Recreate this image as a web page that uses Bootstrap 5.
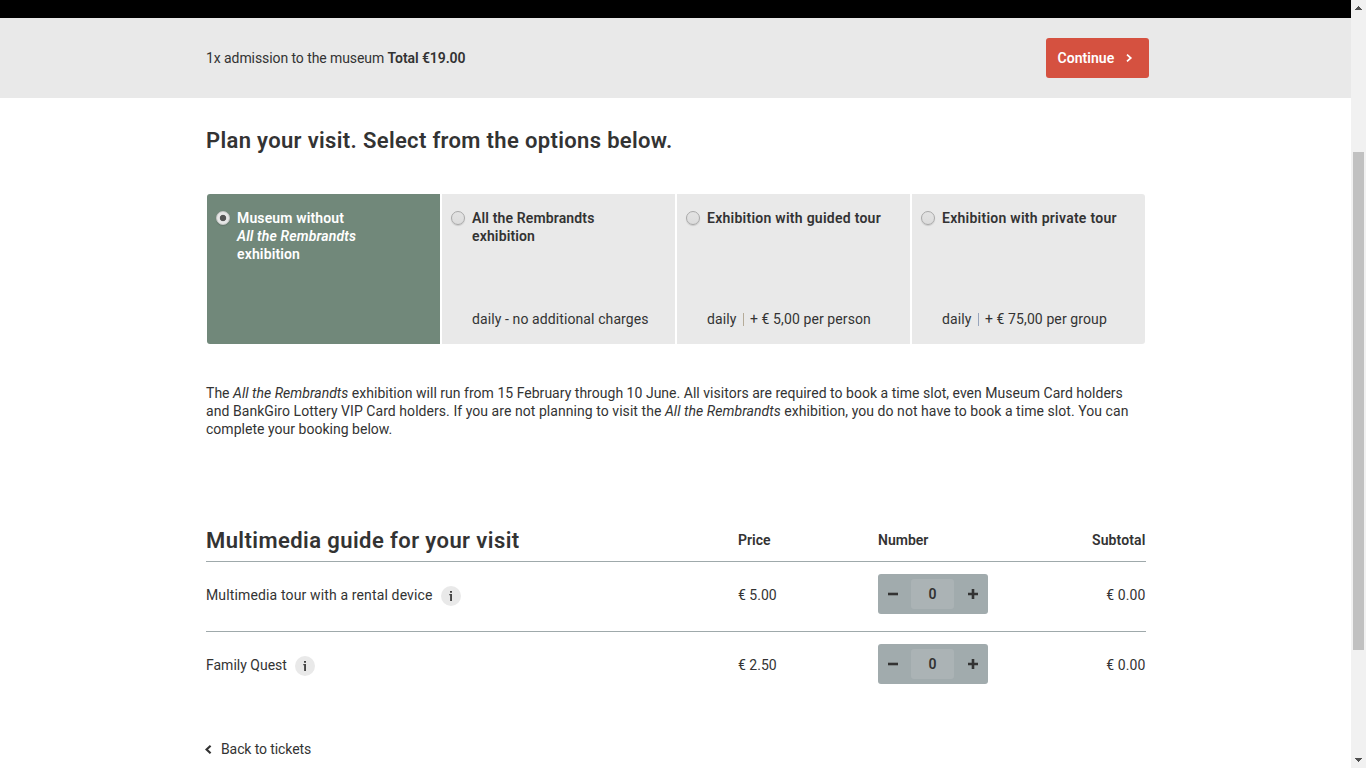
<!DOCTYPE html>
<html lang="en">
<head>
<meta charset="utf-8">
<meta name="viewport" content="width=device-width, initial-scale=1">
<title>Plan your visit</title>
<link rel="stylesheet" href="https://cdn.jsdelivr.net/npm/bootstrap@5.3.0/dist/css/bootstrap.min.css">
<style>
body{font:14px/18px Roboto,"Open Sans",sans-serif;color:#333;height:100vh;overflow:hidden;background:#fff}
b,strong,.semi{font-weight:600}
.wrap{width:940px;margin-left:206px}
.topbar{height:18px;background:#000}
.summary{height:80px;background:#e9e9e9}
.admission{letter-spacing:-.08px}
.btn-go{width:103px;height:40px;background:#d55140;border-radius:3px;margin-right:-3px;padding:0 0 0 11.5px;font-size:14px;letter-spacing:.05px;color:#fff;border:0}
.btn-go:hover{background:#c24535;color:#fff}
.btn-go svg{margin-right:16px}
.title{font-size:22px;line-height:28px;font-weight:600;margin:0;letter-spacing:.34px}
.title-main{padding-top:29px}
.title-guide{letter-spacing:.42px;padding-top:2px}
.options{margin:39px 1px 0;gap:2px;border-radius:3px;overflow:hidden}
.option{width:233px;height:150px;background:#e9e9e9;padding:15px 9px 16px}
.option.active{background:#71887a;color:#fff}
.option-name{font-weight:600;letter-spacing:.26px}
.option-name.tight{letter-spacing:.14px}
.option-note{padding-left:21px;letter-spacing:.1px}
.bar{display:inline-block;width:1px;height:13px;background:#b5ab98;vertical-align:-2px;margin:0 6px 0 6.5px}
.bar.cool{background:#98a5bd}
.dial{width:14px;height:14px;flex:none;margin:2px 7px 0 0;border-radius:50%;border:1px solid #a9a9a9;background:linear-gradient(#e3e3e3,#dcdcdc);box-shadow:0 1px 1px #0002}
.dial.on{background:radial-gradient(circle,#555 2.8px,#e6e6e6 3.6px);border-color:#c5c5c5}
.intro{margin:40px 0 0;white-space:nowrap;letter-spacing:.022px}
.intro .wide{letter-spacing:.055px}
.guide{margin-top:87px}
.guide-row{display:grid;grid-template-columns:532px 140px 140px 1fr;border-bottom:1px solid #9fa9ab}
.guide-head{height:37px;font-weight:600}
.guide-head>span{padding-top:6px}
.guide-item{height:70px;padding-top:12px;align-items:start}
.guide-item:last-child{border:0}
.guide-item .cell{padding-top:12px}
.tour{letter-spacing:.14px}
.end{text-align:right;padding-right:.5px;letter-spacing:.12px}
.tip{display:inline-flex;width:20px;height:20px;border-radius:50%;background:#e9e9e9;align-items:center;justify-content:center;margin:-1px 0 -1px 8px;vertical-align:middle}
.stepper{width:110px;height:40px;background:#a1abad;border-radius:3px}
.stepper button{width:33px;height:40px;border:0;background:none;padding:0;display:flex;align-items:center;justify-content:center}
.stepper .less{margin-right:4px}
.stepper .more{margin-left:5px}
.count{width:43px;height:30px;border-radius:3px;background:#abb3b5;font-weight:600;line-height:30px;text-align:center}
.back{margin-top:38px;color:#333;text-decoration:none;letter-spacing:-.1px}
.back svg{margin:0 9px 0 -1px}
.gutter{width:15px;background:#f1f1f1;padding:6px 0}
.thumb{width:11px;height:498px;background:#c1c1c1;margin-top:142px}
</style>
</head>
<body class="d-flex">
<div class="flex-grow-1">
  <div class="topbar"></div>
  <div class="summary d-flex align-items-center">
    <div class="wrap d-flex align-items-center justify-content-between">
      <div class="admission">1x admission to the museum <strong>Total €19.00</strong></div>
      <button class="btn btn-go semi d-flex align-items-center">Continue
        <svg class="ms-auto" width="7" height="8" viewBox="0 0 7 8" fill="none" stroke="#fff" stroke-width="1.7"><path d="M1 .6 4.8 4 1 7.4"/></svg>
      </button>
    </div>
  </div>
  <main class="wrap">
    <h1 class="title title-main">Plan your visit. Select from the options below.</h1>
    <div class="options d-flex">
      <label class="option active d-flex flex-column justify-content-between">
        <span class="d-flex"><i class="dial on"></i><span class="option-name tight">Museum without<br><em>All the Rembrandts</em><br>exhibition</span></span>
      </label>
      <label class="option d-flex flex-column justify-content-between">
        <span class="d-flex"><i class="dial"></i><span class="option-name tight">All the Rembrandts<br>exhibition</span></span>
        <span class="option-note">daily - no additional charges</span>
      </label>
      <label class="option d-flex flex-column justify-content-between">
        <span class="d-flex"><i class="dial"></i><span class="option-name">Exhibition with guided tour</span></span>
        <span class="option-note">daily<i class="bar"></i>+ € 5,00 per person</span>
      </label>
      <label class="option d-flex flex-column justify-content-between">
        <span class="d-flex"><i class="dial"></i><span class="option-name">Exhibition with private tour</span></span>
        <span class="option-note">daily<i class="bar cool"></i>+ € 75,00 per group</span>
      </label>
    </div>
    <p class="intro">The <em>All the Rembrandts</em> exhibition will run from 15 February through 10 June. All visitors are required to book a time slot, even Museum Card holders<br><span class="wide">and BankGiro Lottery VIP Card holders. If you are not planning to visit the <em>All the Rembrandts</em> exhibition, you do not have to book a time slot. You can</span><br>complete your booking below.</p>
    <section class="guide">
      <div class="guide-row guide-head align-items-start">
        <h2 class="title title-guide">Multimedia guide for your visit</h2>
        <span>Price</span><span>Number</span><span class="end">Subtotal</span>
      </div>
      <div class="guide-row guide-item">
        <div class="cell"><span class="tour">Multimedia tour with a rental device</span><span class="tip"><svg width="4" height="10" viewBox="0 0 4 10" fill="#444"><path d="M1 0h2v1.7H1zM.3 3H3v7H1.1V4.2H.3z"/></svg></span></div>
        <div class="cell">€ 5.00</div>
        <div class="stepper d-flex align-items-center">
          <button aria-label="Less"><svg class="less" width="10" height="10" viewBox="0 0 10 10" fill="#333"><path d="M0 3.7h10v2.6H0z"/></svg></button>
          <span class="count">0</span>
          <button aria-label="More"><svg class="more" width="10" height="10" viewBox="0 0 10 10" fill="#333"><path d="M3.7 0h2.6v3.7H10v2.6H6.3V10H3.7V6.3H0V3.7h3.7z"/></svg></button>
        </div>
        <div class="cell end">€ 0.00</div>
      </div>
      <div class="guide-row guide-item">
        <div class="cell"><span>Family Quest</span><span class="tip"><svg width="4" height="10" viewBox="0 0 4 10" fill="#444"><path d="M1 0h2v1.7H1zM.3 3H3v7H1.1V4.2H.3z"/></svg></span></div>
        <div class="cell">€ 2.50</div>
        <div class="stepper d-flex align-items-center">
          <button aria-label="Less"><svg class="less" width="10" height="10" viewBox="0 0 10 10" fill="#333"><path d="M0 3.7h10v2.6H0z"/></svg></button>
          <span class="count">0</span>
          <button aria-label="More"><svg class="more" width="10" height="10" viewBox="0 0 10 10" fill="#333"><path d="M3.7 0h2.6v3.7H10v2.6H6.3V10H3.7V6.3H0V3.7h3.7z"/></svg></button>
        </div>
        <div class="cell end">€ 0.00</div>
      </div>
    </section>
    <a class="back d-flex align-items-center" href="#"><svg width="7" height="9" viewBox="0 0 7 9" fill="none" stroke="#333" stroke-width="2.2"><path d="M5.6.8 1.6 4.5l4 3.7"/></svg>Back to tickets</a>
  </main>
</div>
<div class="gutter d-flex flex-column align-items-center flex-shrink-0">
  <svg class="flex-shrink-0" width="7" height="4" viewBox="0 0 7 4" fill="#505050" shape-rendering="crispEdges"><path d="M3 0h1v1h1v1h1v1h1v1H0V3h1V2h1V1h1z"/></svg>
  <div class="thumb"></div>
  <svg class="mt-auto flex-shrink-0" width="7" height="4" viewBox="0 0 7 4" fill="#505050" shape-rendering="crispEdges"><path d="M0 0h7v1H6v1H5v1H4v1H3V3H2V2H1V1H0z"/></svg>
</div>
<script src="https://cdn.jsdelivr.net/npm/bootstrap@5.3.0/dist/js/bootstrap.bundle.min.js"></script>
</body>
</html>
